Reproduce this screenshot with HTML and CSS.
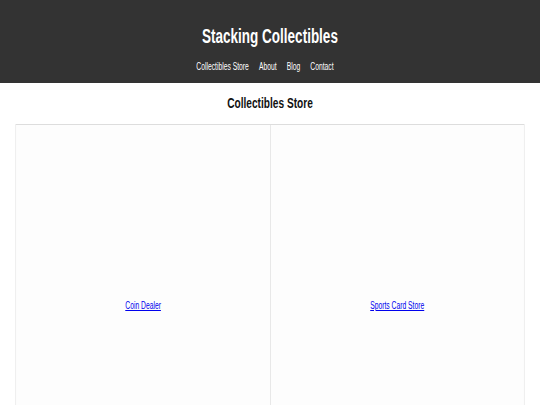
FILE: index.html
```html
<!DOCTYPE html>
<html lang="en">

<head>
    <meta charset="UTF-8">
    <meta name="viewport" content="width=device-width, initial-scale=1.0">
    <title>Stacking Collectibles</title>
    <link rel="stylesheet" href="styles.css">
</head>

<body>
    <div class="page">
        <header class="site-header">
            <h1 class="site-title">Stacking Collectibles</h1>
            <nav class="site-nav">
                <a href="#">Collectibles Store</a>
                <a href="#">About</a>
                <a href="#">Blog</a>
                <a href="#">Contact</a>
            </nav>
        </header>

        <main>
            <h2 class="page-title">Collectibles Store</h2>
            <div class="store-grid">
                <div class="store-cell">
                    <a href="#">Coin Dealer</a>
                </div>
                <div class="store-cell">
                    <a href="#">Sports Card Store</a>
                </div>
            </div>
        </main>
    </div>
</body>

</html>
```

FILE: styles.css
```css
html {
    overflow: hidden;
}

body {
    margin: 0;
    background-color: #fff;
    font-family: "Liberation Sans", Arial, Helvetica, sans-serif;
}

.page {
    width: 800px;
    transform: scaleX(0.675);
    transform-origin: 0 0;
}

/* header */
.site-header {
    background-color: #333333;
    color: #fff;
    text-align: center;
    padding: 25px 0 10px;
}

.site-title {
    margin: 0;
    font-size: 20px;
    font-weight: 700;
    line-height: 23px;
}

.site-nav {
    margin-top: 13px;
    display: flex;
    justify-content: center;
    font-size: 10px;
    line-height: 12px;
}

.site-nav a {
    margin-right: 15px;
    color: #fff;
    text-decoration: none;
}

/* store */
.page-title {
    margin: 11px 0 13px;
    text-align: center;
    font-size: 15px;
    line-height: 17px;
    color: #111;
}

.store-grid {
    margin: 0 23px;
    display: grid;
    grid-template-columns: 1fr 1fr;
    border: 1px solid #dddddd;
}

.store-cell {
    height: 360px;
    display: flex;
    align-items: center;
    justify-content: center;
    background-color: #fdfdfd;
    font-size: 10px;
}

.store-cell + .store-cell {
    border-left: 1px solid #dddddd;
}

.store-cell a {
    color: #0000ee;
}
```
